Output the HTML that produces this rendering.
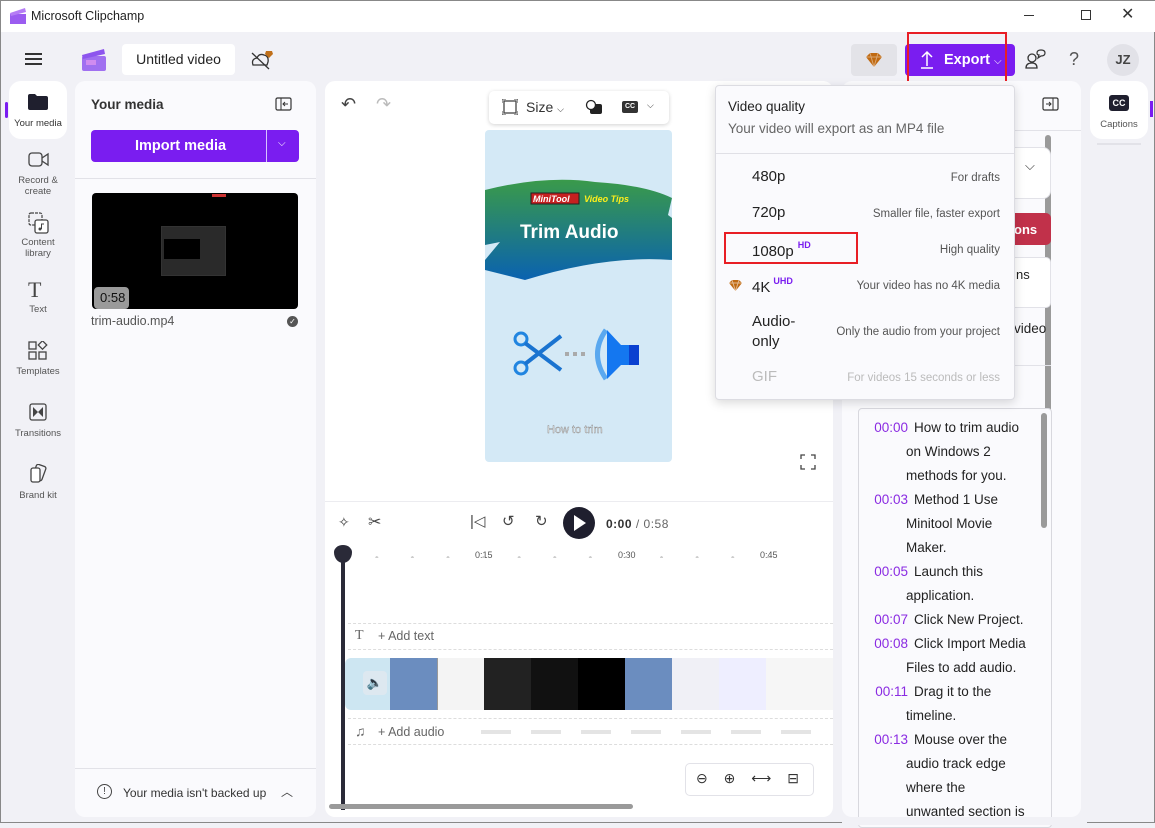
<!DOCTYPE html>
<html><head><meta charset="utf-8"><style>
*{box-sizing:border-box;margin:0;padding:0}
body{width:1155px;height:823px;overflow:hidden;background:#f1f1f6;font-family:"Liberation Sans",sans-serif;color:#222;position:relative;border:1px solid #888}
.a{position:absolute}
.t{font-size:13px}
.nav{position:absolute;left:8px;width:58px;text-align:center;font-size:9.5px;color:#555;line-height:11px}
.mi{position:absolute;left:751px;font-size:15px;color:#222}
.md{position:absolute;right:154px;font-size:11.5px;color:#555;text-align:right}
.ts{color:#8a2be2;display:inline-block;width:40px;text-align:right;margin-right:6px}
.tr{position:absolute;left:867px;font-size:13.5px;line-height:24px;color:#222;white-space:nowrap}
</style></head><body>
<!-- title bar -->
<div class="a" style="left:0;top:0;width:1155px;height:31px;background:#fff"></div>
<svg class="a" style="left:8px;top:6px" width="18" height="18"><rect x="1" y="7" width="16" height="10" fill="#9b5cf0"/><path d="M1 6 L16 1 L17 5 L2 9Z" fill="#b57cf5"/></svg>
<div class="a t" style="left:30px;top:8px;font-size:12.5px">Microsoft Clipchamp</div>
<div class="a" style="left:1023px;top:14px;width:10px;height:1px;background:#333"></div>
<div class="a" style="left:1080px;top:9px;width:10px;height:10px;border:1px solid #333"></div>
<div class="a" style="left:1120px;top:3px;font-size:16px;color:#333">✕</div>
<!-- top bar -->
<div class="a" style="left:24px;top:52px;width:17px;height:2px;background:#333;box-shadow:0 5px 0 #333,0 10px 0 #333"></div>
<svg class="a" style="left:80px;top:46px" width="26" height="26"><rect x="1" y="9" width="24" height="15" rx="2" fill="#a070f0"/><path d="M1 8 L23 2 L24 7 L2 12Z" fill="#8d55ee"/><rect x="5" y="13" width="10" height="5" fill="#d08cf0"/></svg>
<div class="a" style="left:121px;top:43px;width:113px;height:31px;background:#fff;border-radius:4px;font-size:14px;padding:7px 0;text-align:center;white-space:nowrap">Untitled video</div>
<svg class="a" style="left:248px;top:48px" width="26" height="22"><path d="M4 16 Q2 10 8 9 Q10 4 15 6 Q20 7 19 13 L18 16Z" fill="none" stroke="#333" stroke-width="1.3"/><path d="M3 4 L20 20" stroke="#333" stroke-width="1.3"/><path d="M17 2 L23 2 L24 5 L20 9 L16 5Z" fill="#c0701a"/></svg>
<div class="a" style="left:850px;top:43px;width:46px;height:32px;background:#e3e3e8;border-radius:4px"></div>
<svg class="a" style="left:864px;top:51px" width="18" height="16"><path d="M1 5 L5 1 L13 1 L17 5 L9 15Z" fill="#c06a12"/><path d="M1 5 H17 M5 1 L9 15 L13 1" stroke="#fff6" stroke-width="1" fill="none"/></svg>
<div class="a" style="left:904px;top:43px;width:110px;height:32px;background:#7a1df0;border-radius:4px"></div>
<svg class="a" style="left:918px;top:49px" width="16" height="20"><path d="M8 2 V16 M3 7 L8 2 L13 7 M2 18 H14" stroke="#fff" stroke-width="1.5" fill="none"/></svg>
<div class="a" style="left:943px;top:51px;color:#fff;font-weight:bold;font-size:14.5px">Export <span style="font-weight:normal;font-size:10px">⌵</span></div>
<div class="a" style="left:906px;top:31px;width:100px;height:52px;border:2px solid #e81e25"></div>
<svg class="a" style="left:1024px;top:48px" width="22" height="22"><circle cx="7" cy="9" r="4" fill="none" stroke="#333" stroke-width="1.3"/><path d="M1 19 Q1 14 7 14 Q12 14 12 19Z" fill="none" stroke="#333" stroke-width="1.3"/><path d="M12 4 Q12 1 16 1 Q20 1 20 4 Q20 7 16 7 L13 9 L14 6Q12 6 12 4Z" fill="none" stroke="#333" stroke-width="1.2"/></svg>
<div class="a" style="left:1068px;top:48px;font-size:18px;color:#555">?</div>
<div class="a" style="left:1106px;top:43px;width:32px;height:32px;border-radius:50%;background:#e2e2e8;font-size:13px;font-weight:bold;color:#444;text-align:center;line-height:32px">JZ</div>
<!-- left nav -->
<div class="a" style="left:8px;top:80px;width:58px;height:58px;background:#fff;border-radius:12px"></div>
<div class="a" style="left:4px;top:101px;width:3px;height:16px;background:#7a1df0;border-radius:2px"></div>
<svg class="a" style="left:26px;top:92px" width="22" height="18"><path d="M1 3 Q1 1 3 1 H8 L10 3 H19 Q21 3 21 5 V15 Q21 17 19 17 H3 Q1 17 1 15Z" fill="#1f1f2e"/></svg>
<div class="nav" style="top:117px;color:#333">Your media</div>
<svg class="a" style="left:27px;top:151px" width="22" height="16"><rect x="1" y="1" width="13" height="13" rx="3" fill="none" stroke="#444" stroke-width="1.3"/><path d="M14 6 L20 2 V13 L14 9" fill="none" stroke="#444" stroke-width="1.3"/></svg>
<div class="nav" style="top:174px">Record &amp;<br>create</div>
<svg class="a" style="left:27px;top:211px" width="22" height="22"><rect x="1" y="1" width="13" height="12" rx="2" fill="none" stroke="#444" stroke-width="1.2" stroke-dasharray="3 1"/><rect x="7" y="8" width="13" height="13" rx="2" fill="#fff" stroke="#444" stroke-width="1.3"/><circle cx="12" cy="17" r="1.5" fill="#444"/><path d="M13.5 17 V12 H16" stroke="#444" fill="none"/></svg>
<div class="nav" style="top:236px">Content<br>library</div>
<div class="a" style="left:27px;top:276px;font-family:'Liberation Serif',serif;font-size:22px;color:#444">T</div>
<div class="nav" style="top:303px">Text</div>
<svg class="a" style="left:27px;top:340px" width="20" height="20"><rect x="1" y="1" width="7" height="7" fill="none" stroke="#444" stroke-width="1.3"/><rect x="1" y="11" width="7" height="7" fill="none" stroke="#444" stroke-width="1.3"/><rect x="11" y="11" width="7" height="7" fill="none" stroke="#444" stroke-width="1.3"/><rect x="11.5" y="1" width="6" height="6" transform="rotate(45 14.5 4)" fill="none" stroke="#444" stroke-width="1.3"/></svg>
<div class="nav" style="top:365px">Templates</div>
<svg class="a" style="left:28px;top:402px" width="18" height="18"><rect x="1" y="1" width="16" height="16" rx="2" fill="none" stroke="#444" stroke-width="1.3"/><path d="M4 4 L9 9 L4 14Z M14 4 L9 9 L14 14Z" fill="#444"/></svg>
<div class="nav" style="top:427px">Transitions</div>
<svg class="a" style="left:28px;top:463px" width="18" height="20"><rect x="5" y="1" width="10" height="15" rx="2" transform="rotate(20 10 9)" fill="none" stroke="#444" stroke-width="1.3"/><rect x="2" y="4" width="9" height="14" rx="2" fill="#fff" stroke="#444" stroke-width="1.3"/></svg>
<div class="nav" style="top:489px">Brand kit</div>
<!-- media panel -->
<div class="a" style="left:74px;top:80px;width:241px;height:736px;background:#fafafd;border-radius:10px"></div>
<div class="a" style="left:90px;top:96px;font-size:13.5px;font-weight:bold;color:#333">Your media</div>
<svg class="a" style="left:274px;top:96px" width="17" height="14"><rect x="1" y="1" width="15" height="12" rx="1.5" fill="none" stroke="#333" stroke-width="1.2"/><path d="M6 1 V13 M13 7 H8 M10 5 L8 7 L10 9" stroke="#333" fill="none"/></svg>
<div class="a" style="left:90px;top:129px;width:208px;height:32px;background:#7a1df0;border-radius:4px"></div>
<div class="a" style="left:265px;top:129px;width:1px;height:32px;background:#d6c4ff"></div>
<div class="a" style="left:134px;top:137px;color:#fff;font-weight:bold;font-size:14.5px">Import media</div>
<div class="a" style="left:277px;top:137px;color:#fff;font-size:10px">⌵</div>
<div class="a" style="left:74px;top:177px;width:241px;height:1px;background:#e2e2e8"></div>
<div class="a" style="left:91px;top:192px;width:206px;height:116px;background:#000;border-radius:4px"></div>
<div class="a" style="left:160px;top:225px;width:65px;height:50px;background:#2a2a2a;border:1px solid #333"></div>
<div class="a" style="left:163px;top:238px;width:36px;height:20px;background:#000"></div>
<div class="a" style="left:211px;top:193px;width:14px;height:3px;background:#c33"></div>
<div class="a" style="left:93px;top:286px;width:35px;height:22px;background:#9a9a9a;border-radius:4px;font-size:13px;color:#111;padding:3px 6px">0:58</div>
<div class="a" style="left:90px;top:313px;font-size:12.5px;color:#555">trim-audio.mp4</div>
<div class="a" style="left:286px;top:315px;width:11px;height:11px;border-radius:50%;background:#555;color:#fff;font-size:8px;text-align:center;line-height:11px">✓</div>
<div class="a" style="left:74px;top:767px;width:241px;height:1px;background:#e2e2e8"></div>
<div class="a" style="left:96px;top:783px;width:15px;height:15px;border-radius:50%;border:1.3px solid #444;font-size:10px;text-align:center;line-height:13px;color:#444">!</div>
<div class="a" style="left:122px;top:785px;font-size:12px;color:#333">Your media isn't backed up</div>
<div class="a" style="left:280px;top:782px;font-size:12px;color:#444">︿</div>
<!-- center panel -->
<div class="a" style="left:324px;top:80px;width:508px;height:736px;background:#fff;border-radius:10px"></div>
<div class="a" style="left:340px;top:93px;font-size:18px;color:#444">↶</div>
<div class="a" style="left:375px;top:93px;font-size:18px;color:#bbb">↷</div>
<div class="a" style="left:488px;top:90px;width:180px;height:33px;background:#fff;border-radius:5px;box-shadow:0 1px 4px rgba(0,0,0,.18)"></div>
<svg class="a" style="left:501px;top:98px" width="16" height="16"><rect x="2" y="2" width="12" height="12" fill="none" stroke="#444" stroke-width="1.3"/><path d="M0 4 V0 H4 M12 0 H16 V4 M16 12 V16 H12 M4 16 H0 V12" stroke="#444" fill="none"/></svg>
<div class="a" style="left:525px;top:98px;font-size:14px;color:#333">Size <span style="font-size:9px">⌵</span></div>
<svg class="a" style="left:584px;top:98px" width="18" height="16"><rect x="5" y="5" width="12" height="10" rx="2" fill="#222"/><circle cx="6" cy="6" r="4.5" fill="#fff" stroke="#222" stroke-width="1.3"/></svg>
<div class="a" style="left:621px;top:100px;width:16px;height:12px;background:#333;border-radius:2px;color:#fff;font-size:7px;font-weight:bold;text-align:center;line-height:12px">CC</div>
<div class="a" style="left:646px;top:99px;font-size:9px;color:#333">⌵</div>
<div class="a" style="left:484px;top:129px;width:187px;height:332px;background:#d4e9f6;border-radius:4px;overflow:hidden">
<svg width="187" height="332"><path d="M0 60 Q60 45 110 52 Q160 55 187 68 L183 85 L187 88 L187 130 Q120 125 40 150 L0 140 L0 130 L15 112 L0 115Z" fill="url(#g)"/><defs><linearGradient id="g" x1="0" y1="0" x2="0" y2="1"><stop offset="0" stop-color="#3a9a4a"/><stop offset="1" stop-color="#0a62b0"/></linearGradient></defs>
<rect x="46" y="63" width="48" height="11" fill="#c52020" stroke="#222"/>
<text x="48" y="72" font-size="9" font-style="italic" font-weight="bold" fill="#fff" font-family="Liberation Sans">MiniTool</text>
<text x="99" y="72" font-size="9" font-style="italic" font-weight="bold" fill="#ffef1a" font-family="Liberation Sans">Video Tips</text>
<text x="35" y="108" font-size="19" font-weight="bold" fill="#fff" font-family="Liberation Sans">Trim Audio</text>
<circle cx="36" cy="209" r="6" fill="none" stroke="#2185e0" stroke-width="3"/><circle cx="36" cy="238" r="6" fill="none" stroke="#2185e0" stroke-width="3"/><path d="M40 213 L76 240 M40 234 L76 206" stroke="#1a73d0" stroke-width="4"/>
<rect x="80" y="222" width="4" height="4" fill="#aaa"/><rect x="88" y="222" width="4" height="4" fill="#aaa"/><rect x="96" y="222" width="4" height="4" fill="#aaa"/>
<path d="M121 200 Q104 224 121 249" stroke="#5aa8ef" stroke-width="5" fill="none"/><path d="M122 200 L136 215 L154 215 L154 235 L136 235 L122 249Z" fill="#1477f0"/><rect x="144" y="215" width="10" height="20" fill="#0a40d0"/>
<text x="62" y="303" font-size="11" fill="#f4f4f4" stroke="#888" stroke-width=".4" font-family="Liberation Sans">How to trim</text></svg></div>
<svg class="a" style="left:799px;top:453px" width="16" height="16"><path d="M1 5 V1 H5 M11 1 H15 V5 M15 11 V15 H11 M5 15 H1 V11" stroke="#444" fill="none" stroke-width="1.3"/></svg>
<div class="a" style="left:324px;top:500px;width:508px;height:1px;background:#ececf0"></div>
<div class="a" style="left:337px;top:513px;font-size:14px;color:#444">✧</div>
<div class="a" style="left:367px;top:511px;font-size:16px;color:#444">✂</div>
<div class="a" style="left:469px;top:511px;font-size:15px;color:#444">|◁</div>
<div class="a" style="left:501px;top:511px;font-size:15px;color:#444">↺</div>
<div class="a" style="left:534px;top:511px;font-size:15px;color:#444">↻</div>
<div class="a" style="left:562px;top:506px;width:32px;height:32px;border-radius:50%;background:#1f1f2e"></div>
<div class="a" style="left:573px;top:514px;width:0;height:0;border-left:12px solid #fff;border-top:8px solid transparent;border-bottom:8px solid transparent"></div>
<div class="a" style="left:605px;top:516px;font-size:12px;font-weight:bold;color:#333;letter-spacing:.5px">0:00 <span style="font-weight:normal;color:#666">/ 0:58</span></div>
<div class="a" style="left:474px;top:549px;font-size:9px;color:#555">0:15</div>
<div class="a" style="left:617px;top:549px;font-size:9px;color:#555">0:30</div>
<div class="a" style="left:759px;top:549px;font-size:9px;color:#555">0:45</div>
<div class="a" style="left:340px;top:555px;width:440px;height:2px;background-image:radial-gradient(circle,#ccc 1.3px,transparent 1.5px);background-size:35.6px 3px;background-position:18px 0"></div>
<div class="a" style="left:340px;top:545px;width:4px;height:264px;background:#2a2a38"></div>
<div class="a" style="left:333px;top:544px;width:18px;height:18px;background:#2a2a38;border-radius:50% 50% 50% 50%/40% 40% 60% 60%"></div>
<div class="a" style="left:347px;top:622px;width:485px;height:27px;border-top:1px dashed #ddd;border-bottom:1px dashed #ddd"></div>
<div class="a" style="left:354px;top:627px;font-family:'Liberation Serif',serif;font-size:14px;color:#666">T</div>
<div class="a" style="left:377px;top:628px;font-size:12.5px;color:#666">+ Add text</div>
<div class="a" style="left:344px;top:657px;width:488px;height:52px;border-radius:6px 0 0 6px;overflow:hidden;display:flex">
<div style="width:45px;background:#cde6f2"></div><div style="width:47px;background:#6b8dbf"></div><div style="width:47px;background:#f4f4f4;border-left:1px solid #999"></div><div style="width:47px;background:#222"></div><div style="width:47px;background:#111"></div><div style="width:47px;background:#000"></div><div style="width:47px;background:#6b8dbf"></div><div style="width:47px;background:#f0f0f6"></div><div style="width:47px;background:#eef"></div><div style="flex:1;background:#f6f6f6"></div></div>
<div class="a" style="left:362px;top:670px;width:24px;height:24px;background:#dde8f0;border-radius:4px;font-size:13px;text-align:center;line-height:24px">🔈</div>
<div class="a" style="left:347px;top:717px;width:485px;height:27px;border-top:1px dashed #ddd;border-bottom:1px dashed #ddd"></div>
<div class="a" style="left:354px;top:722px;font-size:14px;color:#666">♫</div>
<div class="a" style="left:377px;top:724px;font-size:12.5px;color:#666">+ Add audio</div>
<div class="a" style="left:480px;top:729px;width:350px;height:4px;background:repeating-linear-gradient(90deg,#e4e4e4 0 30px,transparent 30px 50px)"></div>
<div class="a" style="left:684px;top:762px;width:129px;height:33px;border:1px solid #e2e2e8;border-radius:5px;font-size:14px;color:#333;padding:6px 10px;word-spacing:12px">⊖ ⊕ ⟷ ⊟</div>
<div class="a" style="left:328px;top:803px;width:304px;height:5px;background:#9a9a9a;border-radius:3px"></div>
<!-- right panel -->
<div class="a" style="left:841px;top:80px;width:239px;height:736px;background:#fafafd;border-radius:10px"></div>
<svg class="a" style="left:1041px;top:96px" width="17" height="14"><rect x="1" y="1" width="15" height="12" rx="1.5" fill="none" stroke="#333" stroke-width="1.2"/><path d="M11 1 V13 M4 7 H9 M7 5 L9 7 L7 9" stroke="#333" fill="none"/></svg>
<div class="a" style="left:841px;top:129px;width:239px;height:1px;background:#e2e2e8"></div>
<div class="a" style="left:1044px;top:134px;width:6px;height:620px;background:#9a9a9a;border-radius:3px"></div>
<div class="a" style="left:1000px;top:146px;width:50px;height:52px;background:#fff;border:1px solid #e2e2e8;border-radius:0 8px 8px 0;border-left:none;font-size:13px;color:#333;padding:10px 0 0 24px">⌵</div>
<div class="a" style="left:1013px;top:212px;width:37px;height:32px;background:#c1314a;border-radius:0 5px 5px 0;color:#fff;font-weight:bold;font-size:13px;padding:9px 0 0 0">ons</div>
<div class="a" style="left:1013px;top:256px;width:37px;height:51px;background:#fff;border:1px solid #e2e2e8;border-left:none;border-radius:0 5px 5px 0;font-size:13px;padding:9px 0 0 2px">ns</div>
<div class="a" style="left:1013px;top:320px;font-size:13.5px">video</div>
<div class="a" style="left:1013px;top:364px;width:37px;height:1px;background:#e2e2e8"></div>
<div class="a" style="left:857px;top:407px;width:194px;height:420px;background:#fafafd;border:1px solid #d8d8de;border-radius:4px"></div>
<div class="a" style="left:1040px;top:412px;width:6px;height:115px;background:#9a9a9a;border-radius:3px"></div>
<div class="tr" style="top:415px"><span class="ts">00:00</span>How to trim audio</div>
<div class="tr" style="top:439px;left:905px">on Windows 2</div>
<div class="tr" style="top:463px;left:905px">methods for you.</div>
<div class="tr" style="top:487px"><span class="ts">00:03</span>Method 1 Use</div>
<div class="tr" style="top:511px;left:905px">Minitool Movie</div>
<div class="tr" style="top:535px;left:905px">Maker.</div>
<div class="tr" style="top:559px"><span class="ts">00:05</span>Launch this</div>
<div class="tr" style="top:583px;left:905px">application.</div>
<div class="tr" style="top:607px"><span class="ts">00:07</span>Click New Project.</div>
<div class="tr" style="top:631px"><span class="ts">00:08</span>Click Import Media</div>
<div class="tr" style="top:655px;left:905px">Files to add audio.</div>
<div class="tr" style="top:679px"><span class="ts">00:11</span>Drag it to the</div>
<div class="tr" style="top:703px;left:905px">timeline.</div>
<div class="tr" style="top:727px"><span class="ts">00:13</span>Mouse over the</div>
<div class="tr" style="top:751px;left:905px">audio track edge</div>
<div class="tr" style="top:775px;left:905px">where the</div>
<div class="tr" style="top:799px;left:905px">unwanted section is</div>
<div class="a" style="left:841px;top:816px;width:245px;height:8px;background:#f1f1f6"></div>
<!-- captions nav -->
<div class="a" style="left:1089px;top:80px;width:58px;height:58px;background:#fff;border-radius:12px"></div>
<div class="a" style="left:1108px;top:94px;width:20px;height:16px;background:#1f1f2e;border-radius:3px;color:#fff;font-size:9px;font-weight:bold;text-align:center;line-height:16px">CC</div>
<div class="a" style="left:1089px;top:118px;width:58px;text-align:center;font-size:9.5px;color:#555">Captions</div>
<div class="a" style="left:1096px;top:142px;width:44px;height:2px;background:#e2e2e8"></div>
<div class="a" style="left:1149px;top:100px;width:3px;height:16px;background:#7a1df0"></div>
<!-- dropdown -->
<div class="a" style="left:714px;top:84px;width:300px;height:315px;background:#fafafd;border:1px solid #dcdce2;border-radius:4px;box-shadow:0 3px 10px rgba(0,0,0,.15)"></div>
<div class="a" style="left:727px;top:98px;font-size:13.5px;color:#222">Video quality</div>
<div class="a" style="left:727px;top:120px;font-size:13.5px;color:#666">Your video will export as an MP4 file</div>
<div class="a" style="left:715px;top:152px;width:298px;height:1px;background:#e0e0e6"></div>
<div class="mi" style="top:167px">480p</div><div class="md" style="top:171px">For drafts</div>
<div class="mi" style="top:203px">720p</div><div class="md" style="top:207px">Smaller file, faster export</div>
<div class="mi" style="top:239px">1080p<sup style="color:#7a1df0;font-size:9px;font-weight:bold;margin-left:4px;vertical-align:8px">HD</sup></div><div class="md" style="top:243px">High quality</div>
<div class="a" style="left:723px;top:231px;width:134px;height:32px;border:2px solid #e81e25"></div>
<svg class="a" style="left:727px;top:278px" width="15" height="13"><path d="M1 4 L4 1 L11 1 L14 4 L7.5 12Z" fill="#c06a12"/><path d="M1 4 H14 M4 1 L7.5 12 L11 1" stroke="#fff8" fill="none"/></svg>
<div class="mi" style="top:275px">4K<sup style="color:#7a1df0;font-size:9px;font-weight:bold;margin-left:3px;vertical-align:8px">UHD</sup></div><div class="md" style="top:279px">Your video has no 4K media</div>
<div class="mi" style="top:311px;line-height:20px">Audio-<br>only</div><div class="md" style="top:325px">Only the audio from your project</div>
<div class="mi" style="top:367px;color:#bbb">GIF</div><div class="md" style="top:371px;color:#bbb">For videos 15 seconds or less</div>
</body></html>
